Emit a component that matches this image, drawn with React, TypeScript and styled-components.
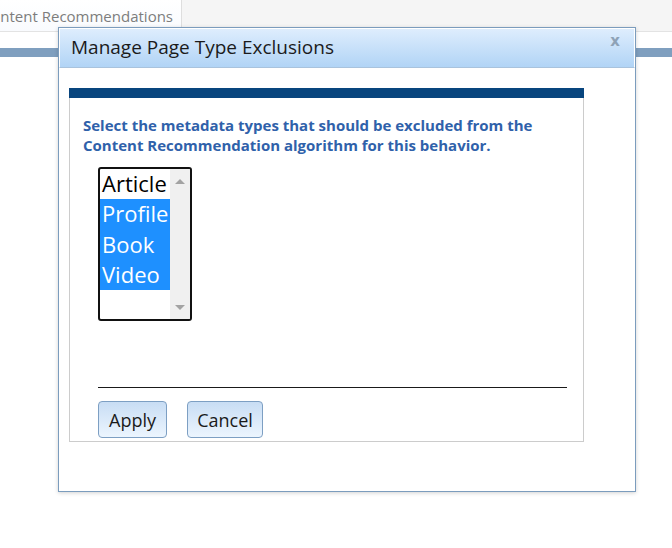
import styled, { createGlobalStyle } from 'styled-components'

// ==================== 全局 ====================

const GlobalStyle = createGlobalStyle`
  html, body {
    margin: 0;
    padding: 0;
    background: #ffffff;
    font-family: "Open Sans", "Noto Sans", Arial, sans-serif;
  }
  * { box-sizing: border-box; }
`

// ==================== 页面背景 ====================

const Page = styled.div`
  position: relative;
  width: 672px;
  height: 548px;
  overflow: hidden;
  background: #ffffff;
`

const TabStrip = styled.div`
  height: 32px;
  background: #f5f5f5;
  border-bottom: 1px solid #e3e3e3;
  display: flex;
  align-items: stretch;
`

const Tab = styled.div`
  width: 182px;
  background: linear-gradient(#ffffff, #f9fbfe);
  border-right: 1px solid #dedede;
  display: flex;
  align-items: center;
  justify-content: flex-end;
  padding-right: 8px;
  overflow: hidden;
  white-space: nowrap;
  font-size: 15px;
  color: #7d7d7d;
`

const HeaderBar = styled.div`
  margin-top: 16px;
  height: 9px;
  background: #7f9fbf;
`

// ==================== 对话框 ====================

const Dialog = styled.div`
  position: absolute;
  left: 58px;
  top: 27px;
  width: 578px;
  height: 465px;
  background: #ffffff;
  border: 1px solid #7b9cbd;
  box-shadow: 0 1px 4px rgba(0, 0, 0, 0.18);
  display: flex;
  flex-direction: column;
`

const TitleBar = styled.div`
  height: 40px;
  border: 1px solid #ffffff;
  border-bottom: 1px solid #a9c3dd;
  background: linear-gradient(#deedfd, #b1d4f6);
  display: flex;
  align-items: center;
  justify-content: space-between;
  padding: 0 14px 0 11px;
`

const Title = styled.div`
  font-size: 19px;
  color: #1b1b1b;
  margin-top: -2px;
`

const Close = styled.button`
  align-self: flex-start;
  margin-top: 3px;
  border: none;
  background: none;
  padding: 0;
  font-family: "DejaVu Sans", sans-serif;
  font-weight: bold;
  font-size: 15px;
  color: #8ea2b6;
  cursor: pointer;
`

const Body = styled.div`
  padding: 20px 0 0 10px;
`

const Panel = styled.div`
  width: 515px;
  height: 354px;
  border: 1px solid #cccccc;
  border-top: none;
  display: flex;
  flex-direction: column;
`

const PanelBand = styled.div`
  height: 10px;
  margin: 0 -1px;
  background: #08457e;
`

const Instructions = styled.p`
  margin: 17px 0 0 13px;
  font-size: 15px;
  font-weight: bold;
  line-height: 20px;
  color: #2f61aa;
`

const Content = styled.div`
  padding-left: 28px;
  display: flex;
  flex-direction: column;
`

// ==================== 列表框 ====================

const ListBox = styled.div`
  margin-top: 12px;
  width: 94px;
  height: 154px;
  border: 2px solid #111111;
  border-radius: 3px;
  display: flex;
  overflow: hidden;
`

const Options = styled.div`
  width: 70px;
  display: flex;
  flex-direction: column;
`

const Option = styled.div<{ $selected: boolean }>`
  height: 30.3px;
  line-height: 29px;
  padding-left: 2px;
  font-size: 22px;
  white-space: nowrap;
  color: ${p => (p.$selected ? '#ffffff' : '#000000')};
  background: ${p => (p.$selected ? '#1e90ff' : 'transparent')};
`

const ScrollTrack = styled.div`
  flex: 1;
  background: #f0f0f0;
  display: flex;
  flex-direction: column;
  justify-content: space-between;
  align-items: center;
  padding: 10px 0 9px;
`

const Arrow = styled.div<{ $dir: 'up' | 'down' }>`
  width: 0;
  height: 0;
  border-left: 5px solid transparent;
  border-right: 5px solid transparent;
  ${p =>
    p.$dir === 'up'
      ? 'border-bottom: 5px solid #a3a3a3;'
      : 'border-top: 5px solid #a3a3a3;'}
`

// ==================== 底部 ====================

const Divider = styled.hr`
  margin: 66px 0 0 0;
  width: 469px;
  border: none;
  border-top: 1px solid #1a1a1a;
`

const Actions = styled.div`
  margin-top: 13px;
  display: flex;
  gap: 20px;
`

const Button = styled.button<{ $width: number }>`
  width: ${p => p.$width}px;
  height: 37px;
  padding: 0;
  border: 1px solid #7d9fc3;
  border-radius: 4px;
  background: linear-gradient(#c8ddf4, #ecf5fe);
  font-family: "Open Sans", "Noto Sans", Arial, sans-serif;
  font-size: 18px;
  color: #1a1a1a;
  cursor: pointer;
`

// ==================== 组件 ====================

const ITEMS = [
  { label: 'Article', selected: false },
  { label: 'Profile', selected: true },
  { label: 'Book', selected: true },
  { label: 'Video', selected: true },
]

export default function App() {
  return (
    <Page>
      <GlobalStyle />
      <TabStrip>
        <Tab>Content Recommendations</Tab>
      </TabStrip>
      <HeaderBar />

      <Dialog role="dialog">
        <TitleBar>
          <Title>Manage Page Type Exclusions</Title>
          <Close aria-label="close">x</Close>
        </TitleBar>
        <Body>
          <Panel>
            <PanelBand />
            <Instructions>
              Select the metadata types that should be excluded from the
              <br />
              Content Recommendation algorithm for this behavior.
            </Instructions>
            <Content>
              <ListBox role="listbox" aria-multiselectable="true">
                <Options>
                  {ITEMS.map(item => (
                    <Option key={item.label} $selected={item.selected} role="option" aria-selected={item.selected}>
                      {item.label}
                    </Option>
                  ))}
                </Options>
                <ScrollTrack>
                  <Arrow $dir="up" />
                  <Arrow $dir="down" />
                </ScrollTrack>
              </ListBox>
              <Divider />
              <Actions>
                <Button $width={69}>Apply</Button>
                <Button $width={76}>Cancel</Button>
              </Actions>
            </Content>
          </Panel>
        </Body>
      </Dialog>
    </Page>
  )
}
